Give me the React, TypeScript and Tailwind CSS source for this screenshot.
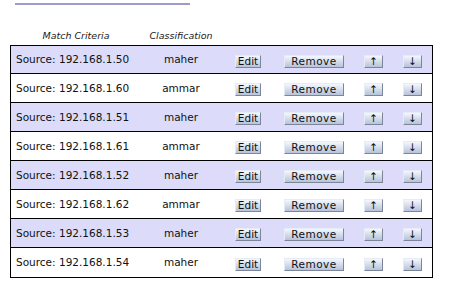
import React from 'react';

const rows = [
    { ip: '192.168.1.50', cls: 'maher' },
    { ip: '192.168.1.60', cls: 'ammar' },
    { ip: '192.168.1.51', cls: 'maher' },
    { ip: '192.168.1.61', cls: 'ammar' },
    { ip: '192.168.1.52', cls: 'maher' },
    { ip: '192.168.1.62', cls: 'ammar' },
    { ip: '192.168.1.53', cls: 'maher' },
    { ip: '192.168.1.54', cls: 'maher' },
];

function Btn({ label, className }: { label: string; className: string }) {
    return (
        <button
            className={
                'h-[13px] flex items-center justify-center text-[10.5px] leading-none text-[#111] bg-gradient-to-b from-[#f4f7fd] to-[#b6c3dc] border border-t-[#e6ecf6] border-l-[#e6ecf6] border-r-[#7c8698] border-b-[#7c8698] ' +
                className
            }
        >
            {label}
        </button>
    );
}

export default function App() {
    return (
        <div className="w-[474px] h-[304px] bg-white text-[#111] font-['DejaVu_Sans','Liberation_Sans',sans-serif]">
            <div className="pt-[3px] pl-[15px]">
                <div className="w-[175px] h-[2px] bg-[#9c9cc6]" />
            </div>

            <div className="flex mt-[25px] h-[13px] items-center text-[9.5px] italic text-[#222]">
                <div className="ml-[11px] w-[130px] text-center">Match Criteria</div>
                <div className="w-[80px] text-center">Classification</div>
            </div>

            <div className="mt-[2px] ml-[10px] w-[423px] border border-black divide-y divide-black">
                {rows.map((r, i) => (
                    <div
                        key={r.ip}
                        className={'flex items-center h-[29px] first:h-[28px] text-[10.5px] ' + (i % 2 === 0 ? 'bg-[#dcdcfa]' : 'bg-white')}
                    >
                        <div className="w-[140px] pl-[5px] pt-[1px] whitespace-nowrap">Source: {r.ip}</div>
                        <div className="w-[60px] pt-[1px] text-center">{r.cls}</div>
                        <div className="flex items-center pt-[3px]">
                            <Btn label="Edit" className="ml-[24px] w-[26px]" />
                            <Btn label="Remove" className="ml-[23px] w-[60px] tracking-[0.5px]" />
                            <Btn label="↑" className="ml-[20px] w-[19px]" />
                            <Btn label="↓" className="ml-[20px] w-[19px]" />
                        </div>
                    </div>
                ))}
            </div>
        </div>
    );
}
